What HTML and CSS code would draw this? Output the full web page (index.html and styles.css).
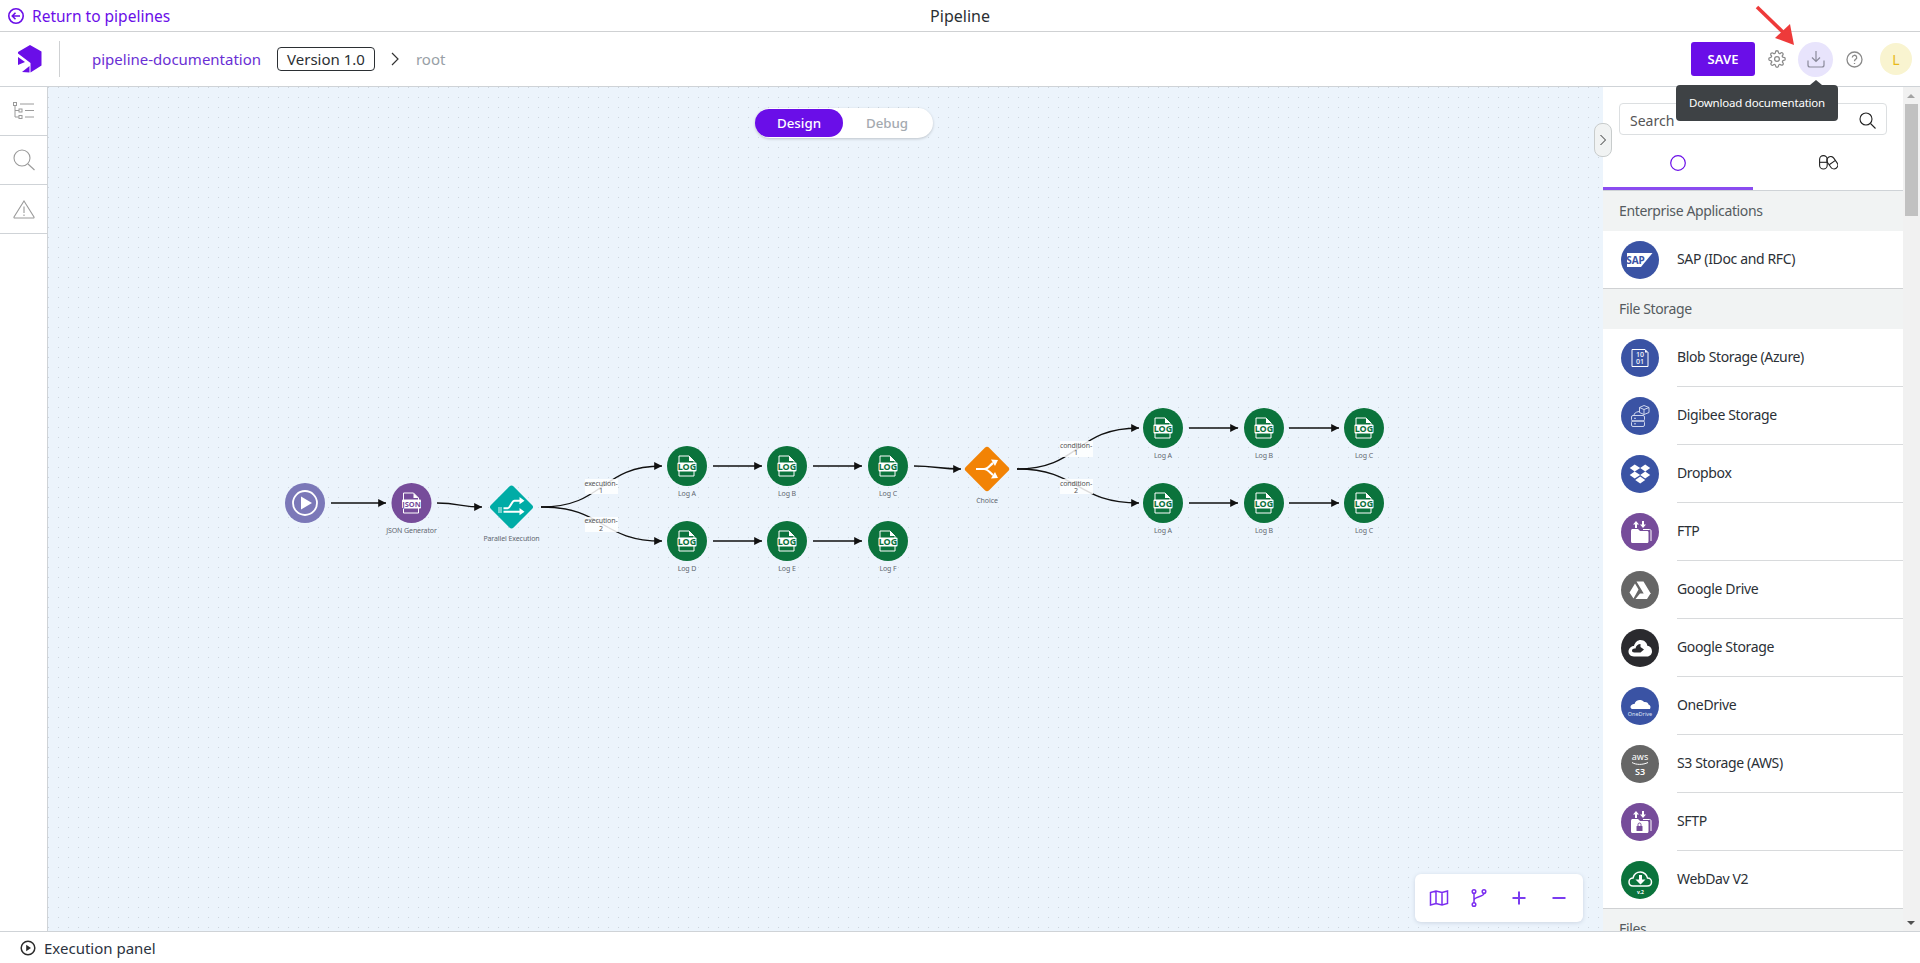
FILE: index.html
```html
<!DOCTYPE html>
<html>
<head>
    <meta name="viewport" content="width=device-width, initial-scale=1">
    <link rel="icon" href="data:,">
    <link rel="stylesheet" href="styles.css">
    <title>Pipeline</title>
</head>
<body>
    <div class="topbar">
        <a class="back-link">
            <svg width="18" height="18" viewBox="0 0 18 18" fill="none" stroke="currentColor" stroke-width="1.6"><circle cx="9" cy="9" r="7.2"/><path d="M13 9H5.5M8.5 5.8 5.3 9l3.2 3.2"/></svg>
            Return to pipelines
        </a>
        <span class="page-title">Pipeline</span>
    </div>

    <div class="header">
        <div class="logo">
            <svg width="26" height="28" viewBox="0 0 26 28" fill="#6a0ee8"><path d="M13 0 24.500 6.500V20.500L13.500 27.500V18L1 8.500V7Z"/><path d="M1 12 8 17 1 20Z"/><path d="M5 27 12.500 21V27.500Z"/></svg>
        </div>
        <div class="crumbs">
            <span class="pipeline-name">pipeline-documentation</span>
            <span class="version">Version 1.0</span>
            <svg class="crumb-arrow" width="10" height="14" viewBox="0 0 10 14" fill="none" stroke="#333" stroke-width="1.200"><path d="M2 1l6 6-6 6"/></svg>
            <span class="crumb-root">root</span>
        </div>
        <div class="actions">
            <button class="save-btn">SAVE</button>
            <span class="action">
                <svg width="18" height="18" viewBox="0 0 24 24" fill="none" stroke="#8a8a8a" stroke-width="1.700"><circle cx="12" cy="12" r="3.200"/><path d="M19.400 15a1.650 1.650 0 0 0 .33 1.820l.06.06a2 2 0 1 1-2.830 2.830l-.06-.06a1.650 1.650 0 0 0-2.800 1.170V21a2 2 0 1 1-4 0v-.09a1.650 1.650 0 0 0-2.800-1.170l-.06.06a2 2 0 1 1-2.830-2.830l.06-.06a1.650 1.650 0 0 0-1.170-2.800H3a2 2 0 1 1 0-4h.09a1.650 1.650 0 0 0 1.170-2.800l-.06-.06a2 2 0 1 1 2.830-2.830l.06.06a1.650 1.650 0 0 0 2.800-1.170V3a2 2 0 1 1 4 0v.09a1.650 1.650 0 0 0 2.800 1.170l.06-.06a2 2 0 1 1 2.830 2.830l-.06.06a1.650 1.650 0 0 0 1.170 2.800H21a2 2 0 1 1 0 4h-.09a1.650 1.650 0 0 0-1.510 1z"/></svg>
            </span>
            <span class="action action-active">
                <svg width="18" height="18" viewBox="0 0 18 18" fill="none" stroke="#8a8a9a" stroke-width="1.200"><path d="M9 1v10M5 7.500 9 11.500l4-4M1 10.500V15a2 2 0 0 0 2 2h12a2 2 0 0 0 2-2v-4.500"/></svg>
            </span>
            <span class="action">
                <svg width="17" height="17" viewBox="0 0 17 17" fill="none" stroke="#8a8a8a" stroke-width="1.300"><circle cx="8.500" cy="8.500" r="7.500"/><path d="M6.300 6.500a2.200 2.200 0 1 1 3.300 1.900c-.8.500-1.100.9-1.100 1.800"/><path d="M8.500 12v1"/></svg>
            </span>
            <span class="avatar">L</span>
        </div>
        <span class="tooltip">Download documentation</span>
        <svg class="red-arrow" width="42" height="42" viewBox="0 0 42 42"><path d="M2 2 33.500 32.500" stroke="#ee3a3a" stroke-width="3.600" fill="none"/><path d="M39 40 20 33 35 19Z" fill="#ee3a3a"/></svg>
    </div>

    <div class="workspace">
        <div class="side-tools">
            <div class="side-tool">
                <svg width="22" height="18" viewBox="0 0 22 18" fill="none" stroke="#9a9a9a" stroke-width="1"><rect x=".5" y=".5" width="3" height="3"/><rect x="6" y="7" width="3" height="3"/><rect x="6" y="13.500" width="3" height="3"/><path d="M2 4v11h4M2 8.500h4M7 2h14M12 8.500h9M12 15h9"/></svg>
            </div>
            <div class="side-tool">
                <svg width="22" height="22" viewBox="0 0 22 22" fill="none" stroke="#9a9a9a" stroke-width="1.100"><circle cx="9" cy="9" r="8"/><path d="M15 15l6.500 6"/></svg>
            </div>
            <div class="side-tool">
                <svg width="22" height="19" viewBox="0 0 22 19" fill="none" stroke="#9a9a9a" stroke-width="1.100"><path d="M11 1 21 17a.7.7 0 0 1-.6 1H1.600a.7.7 0 0 1-.6-1Z"/><path d="M11 6.500v6.500M11 14.500v1.500"/></svg>
            </div>
        </div>

        <div class="canvas">
            <div class="mode-switch">
                <span class="mode mode-on">Design</span>
                <span class="mode">Debug</span>
            </div>

            <svg class="diagram" width="1555" height="843" viewBox="48 87 1555 843">
                <defs>
                    <marker id="head" markerWidth="7" markerHeight="7" refX="6" refY="3" orient="auto"><path d="M0 0 6 3 0 6Z" fill="#111"/></marker>
                    <g id="log">
                        <circle r="20" fill="#0b733c"/>
                        <path d="M-8-3V-10H2L7-5V-3M-8 5V10H7V5" fill="none" stroke="#fff" stroke-width="1"/>
                        <path d="M2-10 7-5H2Z" fill="#fff"/>
                        <rect x="-9.500" y="-3.500" width="19" height="9" rx="1" fill="#fff"/>
                        <text y="4.300" class="in-log" fill="#0b733c">LOG</text>
                    </g>
                </defs>

                <g fill="none" stroke="#111" stroke-width="1.300" marker-end="url(#head)">
                    <path d="M331 503H386"/>
                    <path d="M437 503C460 503 460 507 482 507"/>
                    <path d="M541 507C605 507 600 466 662 466"/>
                    <path d="M541 507C605 507 600 541 662 541"/>
                    <path d="M713 466H762"/>
                    <path d="M813 466H862"/>
                    <path d="M713 541H762"/>
                    <path d="M813 541H862"/>
                    <path d="M914 466C935 466 940 469 961 469"/>
                    <path d="M1017 469C1080 469 1075 428 1139 428"/>
                    <path d="M1017 469C1080 469 1075 503 1139 503"/>
                    <path d="M1189 428H1238"/>
                    <path d="M1289 428H1339"/>
                    <path d="M1189 503H1238"/>
                    <path d="M1289 503H1339"/>
                </g>

                <g class="edge-label">
                    <rect x="585" y="479" width="33" height="15"/>
                    <text x="601" y="486">execution-</text><text x="601" y="493">1</text>
                    <rect x="585" y="517" width="33" height="15"/>
                    <text x="601" y="523">execution-</text><text x="601" y="531">2</text>
                    <rect x="1060" y="441" width="33" height="16"/>
                    <text x="1076" y="448">condition-</text><text x="1076" y="455">1</text>
                    <rect x="1060" y="479" width="33" height="15"/>
                    <text x="1076" y="486">condition-</text><text x="1076" y="493">2</text>
                </g>

                <g transform="translate(305 503)">
                    <circle r="20" fill="#7b78b8"/>
                    <circle r="12" fill="none" stroke="#fff" stroke-width="1.800"/>
                    <path d="M-4-6.500 7 0-4 6.500Z" fill="#fff"/>
                </g>
                <g transform="translate(411.500 503)">
                    <circle r="20" fill="#764c9a"/>
                    <path d="M-8-3V-10H2L7-5V-3M-8 5V10H7V5" fill="none" stroke="#fff" stroke-width="1"/>
                    <path d="M2-10 7-5H2Z" fill="#fff"/>
                    <rect x="-9.500" y="-3.500" width="19" height="9" rx="1" fill="#fff"/>
                    <text y="3.800" class="in-json" fill="#764c9a">JSON</text>
                </g>
                <g transform="translate(511.500 507)">
                    <rect x="-16" y="-16" width="32" height="32" rx="3" transform="rotate(45)" fill="#00aca6"/>
                    <path d="M-8 1.300H-4C-1 1.300 0-6.300 3-6.300H9M-8 4.700H9" fill="none" stroke="#fff" stroke-width="2"/>
                    <path d="M8-10 13-6.300 8-2.800ZM8 1 13 4.700 8 8.200Z" fill="#fff"/>
                    <path d="M-12.500 0V6M-10.500 0V6" stroke="#fff" stroke-width=".9"/>
                </g>
                <g transform="translate(987 469)">
                    <rect x="-16.500" y="-16.500" width="33" height="33" rx="3" transform="rotate(45)" fill="#f28305"/>
                    <path d="M-11 0H-3C1 0 3-4 6-6M-3 0C1 0 3 4 6 6" fill="none" stroke="#fff" stroke-width="2.200"/>
                    <path d="M4-9.500 11-9 8-3ZM4 9.500 11 9 8 3Z" fill="#fff"/>
                </g>

                <use href="#log" x="687" y="466"/>
                <use href="#log" x="787" y="466"/>
                <use href="#log" x="888" y="466"/>
                <use href="#log" x="687" y="541"/>
                <use href="#log" x="787" y="541"/>
                <use href="#log" x="888" y="541"/>
                <use href="#log" x="1163" y="428"/>
                <use href="#log" x="1264" y="428"/>
                <use href="#log" x="1364" y="428"/>
                <use href="#log" x="1163" y="503"/>
                <use href="#log" x="1264" y="503"/>
                <use href="#log" x="1364" y="503"/>

                <g class="node-label">
                    <text x="411.500" y="533">JSON Generator</text>
                    <text x="511.500" y="541">Parallel Execution</text>
                    <text x="687" y="496">Log A</text>
                    <text x="787" y="496">Log B</text>
                    <text x="888" y="496">Log C</text>
                    <text x="687" y="571">Log D</text>
                    <text x="787" y="571">Log E</text>
                    <text x="888" y="571">Log F</text>
                    <text x="987" y="503">Choice</text>
                    <text x="1163" y="458">Log A</text>
                    <text x="1264" y="458">Log B</text>
                    <text x="1364" y="458">Log C</text>
                    <text x="1163" y="533">Log A</text>
                    <text x="1264" y="533">Log B</text>
                    <text x="1364" y="533">Log C</text>
                </g>
            </svg>

            <div class="zoom-tools">
                <svg width="20" height="20" viewBox="0 0 20 20" fill="none" stroke="#7a2cf0" stroke-width="1.500"><path d="M1.500 4.500 7 3l6 1.500L18.500 3v12.500L13 17l-6-1.500-5.500 1.500ZM7 3v12.500M13 4.500V17"/></svg>
                <svg width="20" height="20" viewBox="0 0 20 20" fill="none" stroke="#7a2cf0" stroke-width="1.500"><circle cx="5" cy="3.500" r="1.800"/><circle cx="15" cy="3.500" r="1.800"/><circle cx="5" cy="16.500" r="1.800"/><path d="M5 5.300v9.400M15 5.300c0 4-10 3-10 7"/></svg>
                <svg width="20" height="20" viewBox="0 0 20 20" fill="none" stroke="#7a3cf0" stroke-width="2"><path d="M10 3.500v13M3.500 10h13"/></svg>
                <svg width="20" height="20" viewBox="0 0 20 20" fill="none" stroke="#7a3cf0" stroke-width="2"><path d="M3.500 10h13"/></svg>
            </div>
        </div>

        <div class="panel">
            <span class="collapse-handle">
                <svg width="8" height="12" viewBox="0 0 8 12" fill="none" stroke="#333" stroke-width="1"><path d="M1.500 1l5 5-5 5"/></svg>
            </span>
            <div class="panel-main">
                <div class="search-row">
                    <div class="search-box">
                        <span>Search</span>
                        <svg width="17" height="17" viewBox="0 0 17 17" fill="none" stroke="#222" stroke-width="1.100"><circle cx="7" cy="7" r="6"/><path d="M11.500 11.500l5 5"/></svg>
                    </div>
                </div>
                <div class="tabs">
                    <div class="tab tab-on">
                        <svg width="16" height="16" viewBox="0 0 16 16" fill="none" stroke="#6a0ee8" stroke-width="1.200"><circle cx="8" cy="8" r="7.300"/></svg>
                    </div>
                    <div class="tab">
                        <svg width="19" height="15" viewBox="0 0 19 15" fill="none" stroke="#222" stroke-width="1.100"><rect x=".6" y=".6" width="7.600" height="13.400" rx="3.800"/><path d="M.6 7.300h7.600"/><rect x="9.500" y="1" width="7.600" height="13.400" rx="3.800" transform="rotate(-35 13.300 7.700)"/><path d="M10.200 9.800l6.200-4.400"/></svg>
                    </div>
                </div>

                <div class="section-head">Enterprise Applications</div>
                <div class="item item-last">
                    <svg class="item-icon" viewBox="0 0 38 38"><circle cx="19" cy="19" r="19" fill="#3a53a4"/><path d="M6 12H31.500L20 26H6Z" fill="#fff"/><text x="14.500" y="23" class="in-sap" fill="#3a53a4">SAP</text></svg>
                    <span class="item-name">SAP (IDoc and RFC)</span>
                </div>

                <div class="section-head">File Storage</div>
                <div class="item">
                    <svg class="item-icon" viewBox="0 0 38 38"><circle cx="19" cy="19" r="19" fill="#3a53a4"/><path d="M11 10.500H24L27 13.500V27.500H11Z" fill="none" stroke="#fff" stroke-width="1"/><path d="M24 10.500 27 13.500H24Z" fill="#fff"/><text x="19" y="18" class="in-small" fill="#fff">10</text><text x="19" y="25" class="in-small" fill="#fff">01</text></svg>
                    <span class="item-name">Blob Storage (Azure)</span>
                </div>
                <div class="item">
                    <svg class="item-icon" viewBox="0 0 38 38"><circle cx="19" cy="19" r="19" fill="#3a53a4"/><g fill="none" stroke="#dfe4f4" stroke-width=".9"><rect x="10.500" y="18.500" width="13" height="5.500" rx="1.500"/><rect x="10.500" y="24" width="13" height="5.500" rx="1.500"/><path d="M13 18.500c0-2 1.500-3.500 5-4M18.500 10.500 23 8.500 28 10.500V15.500L23 17.500 18.500 15.500ZM18.500 10.500 23 12.500 28 10.500M23 12.500V17.500M13 21.300h2M13 26.800h2"/></g></svg>
                    <span class="item-name">Digibee Storage</span>
                </div>
                <div class="item">
                    <svg class="item-icon" viewBox="0 0 38 38"><circle cx="19" cy="19" r="19" fill="#3a53a4"/><path d="M14 10 19.500 13.500 14 17 9 13.500ZM24.500 10 29.500 13.500 24.500 17 19.500 13.500ZM14 17 19.500 20.500 14 24 9 20.500ZM24.500 17 29.500 20.500 24.500 24 19.500 20.500ZM19.500 22 24.500 25.500 19.500 29 14.500 25.500Z" fill="#fff" transform="translate(-.3 -.5)"/></svg>
                    <span class="item-name">Dropbox</span>
                </div>
                <div class="item">
                    <svg class="item-icon" viewBox="0 0 38 38"><circle cx="19" cy="19" r="19" fill="#764c9a"/><path d="M10 18.500C10 16.500 10.500 16 12 16H17L19 18H26C27 18 27.500 18.500 27.500 19.500V28C27.500 29.500 27 30 26 30H11.500C10.500 30 10 29.500 10 28Z" fill="#fff"/><path d="M22 16.500H28.500C29.500 16.500 30 17 30 18V28" fill="none" stroke="#fff" stroke-width="1"/><path d="M15 8 18 11.500H16V15H14V11.500H12ZM22 15 19 11.500H21V8H23V11.500H25Z" fill="#fff"/></svg>
                    <span class="item-name">FTP</span>
                </div>
                <div class="item">
                    <svg class="item-icon" viewBox="0 0 38 38"><circle cx="19" cy="19" r="19" fill="#666"/><path d="M15.500 10.500H22.500L30 23H23ZM14 12.500 17.500 18.500 12.500 27.500 8.500 21.500ZM19 22.500H29.500L26 28H14.500Z" fill="#fff"/></svg>
                    <span class="item-name">Google Drive</span>
                </div>
                <div class="item">
                    <svg class="item-icon" viewBox="0 0 38 38"><circle cx="19" cy="19" r="19" fill="#2a2a2e"/><path d="M13 27.500C9 27.500 7.500 24.500 7.500 22.500 7.500 19.500 10 17 13 17 14 13 17 11 19.500 11 23.500 11 26 14 26.500 17 29.500 17 31 19.500 31 22.500 31 25 29 27.500 26 27.500Z" fill="#fff"/><path d="M13.500 23.500C11.500 23.500 11 22.500 11 21.500 11 20 12.500 19.500 14.500 19.500 15 16.500 17 15 19.500 15V18L23 20.500 19.500 23.500Z" fill="#2a2a2e"/></svg>
                    <span class="item-name">Google Storage</span>
                </div>
                <div class="item">
                    <svg class="item-icon" viewBox="0 0 38 38"><circle cx="19" cy="19" r="19" fill="#3a53a4"/><path d="M12 22C9.500 22 9 20 10 18.500 11 17 12.500 17 13.500 17 14.500 13 20 11.500 23 15 25.500 14.500 27.500 16 27.500 17.500 29.500 18 30 20 29 22Z" fill="#fff"/><text x="19" y="28.500" class="in-onedrive" fill="#dfe4f4">OneDrive</text></svg>
                    <span class="item-name">OneDrive</span>
                </div>
                <div class="item">
                    <svg class="item-icon" viewBox="0 0 38 38"><circle cx="19" cy="19" r="19" fill="#666"/><text x="19" y="15" class="in-aws" fill="#fff">aws</text><path d="M11 17.500C15 20 22 20 27 17.500" fill="none" stroke="#fff" stroke-width="1"/><text x="19" y="30" class="in-s3" fill="#fff">S3</text></svg>
                    <span class="item-name">S3 Storage (AWS)</span>
                </div>
                <div class="item">
                    <svg class="item-icon" viewBox="0 0 38 38"><circle cx="19" cy="19" r="19" fill="#764c9a"/><path d="M10 18.500C10 16.500 10.500 16 12 16H17L19 18H26C27 18 27.500 18.500 27.500 19.500V28C27.500 29.500 27 30 26 30H11.500C10.500 30 10 29.500 10 28Z" fill="#fff"/><path d="M22 16.500H28.500C29.500 16.500 30 17 30 18V28" fill="none" stroke="#fff" stroke-width="1"/><path d="M15 8 18 11.500H16V15H14V11.500H12ZM22 15 19 11.500H21V8H23V11.500H25Z" fill="#fff"/><rect x="15.500" y="23" width="6" height="5" rx=".5" fill="#764c9a"/><path d="M17 23V21.500a1.500 1.500 0 0 1 3 0V23" fill="none" stroke="#764c9a" stroke-width="1"/></svg>
                    <span class="item-name">SFTP</span>
                </div>
                <div class="item item-last">
                    <svg class="item-icon" viewBox="0 0 38 38"><circle cx="19" cy="19" r="19" fill="#0b733c"/><path d="M12 25C9 25 8 23 8 21 8 18.500 10 17 12 17 13 13 16 11 19.500 11 23 11 26 14 26.500 17 29 17 30.500 19 30.500 21 30.500 23 29 25 26 25Z" fill="none" stroke="#fff" stroke-width="1.500"/><path d="M19.500 23.500 14.500 18.500H18V14H21V18.500H24.500Z" fill="#fff"/><text x="19.500" y="33" class="in-v2" fill="#fff">v.2</text></svg>
                    <span class="item-name">WebDav V2</span>
                </div>

                <div class="section-head">Files</div>
            </div>
            <div class="scrollbar">
                <span class="scroll-up"></span>
                <span class="scroll-thumb"></span>
                <span class="scroll-down"></span>
            </div>
        </div>
    </div>

    <div class="bottombar">
        <svg width="16" height="16" viewBox="0 0 16 16" fill="none" stroke="#2b2b2b" stroke-width="1.500"><circle cx="8" cy="8" r="6.800"/><path d="M6.200 4.800 11 8 6.200 11.200Z" fill="#2b2b2b" stroke="none"/></svg>
        Execution panel
    </div>
</body>
</html>
```

FILE: styles.css
```css
* {
    box-sizing: border-box;
}

html, body {
    margin: 0;
    height: 100%;
}

body {
    display: flex;
    flex-direction: column;
    overflow: hidden;
    font-family: "Noto Sans", "Open Sans", sans-serif;
    font-size: 14px;
    color: #2b2f33;
    background-color: #fff;
}

.topbar {
    position: relative;
    display: flex;
    align-items: center;
    justify-content: center;
    flex: 0 0 32px;
    border-bottom: 1px solid #cfd1d3;
}

.back-link {
    position: absolute;
    left: 7px;
    top: 6px;
    display: flex;
    align-items: center;
    gap: 7px;
    font-size: 15.500px;
    line-height: 20px;
    color: #6a0ee8;
}

.page-title {
    font-size: 16px;
    line-height: 20px;
    color: #2b2f33;
}

.header {
    position: relative;
    display: flex;
    align-items: center;
    flex: 0 0 55px;
    border-bottom: 1px solid #cfd3d7;
}

.logo {
    display: flex;
    align-items: center;
    width: 60px;
    height: 36px;
    padding-left: 17px;
    border-right: 1px solid #cfd1d3;
}

.crumbs {
    display: flex;
    align-items: center;
    margin-left: 32px;
}

.pipeline-name {
    font-size: 15px;
    color: #6a2fd4;
}

.version {
    margin-left: 16px;
    padding: 0 9px;
    height: 24px;
    line-height: 22px;
    font-size: 15px;
    color: #2b2f33;
    border: 1px solid #2b2f33;
    border-radius: 4px;
}

.crumb-arrow {
    margin-left: 15px;
}

.crumb-root {
    margin-left: 16px;
    font-size: 15px;
    color: #98a0a6;
}

.actions {
    display: flex;
    align-items: center;
    margin-left: auto;
    padding-right: 8px;
}

.save-btn {
    width: 64px;
    height: 34px;
    border: 0;
    border-radius: 3px;
    font-family: inherit;
    font-size: 13px;
    font-weight: 600;
    color: #fff;
    background-color: #6a0ee8;
}

.action {
    display: flex;
    align-items: center;
    justify-content: center;
    width: 35px;
    height: 35px;
    margin-left: 4px;
    border-radius: 50%;
}

.action-active {
    background-color: #e8e4fc;
}

.avatar {
    display: flex;
    align-items: center;
    justify-content: center;
    width: 32px;
    height: 32px;
    margin-left: 8px;
    border-radius: 50%;
    font-size: 14px;
    color: #e8b818;
    background-color: #f9f4d0;
}

.tooltip {
    position: absolute;
    right: 82px;
    top: 53px;
    z-index: 5;
    width: 162px;
    height: 36px;
    line-height: 36px;
    text-align: center;
    font-size: 11.500px;
    letter-spacing: -.2px;
    color: #fff;
    background-color: #3e4245;
    border-radius: 4px;
}

.tooltip:before {
    content: "";
    position: absolute;
    left: 134px;
    top: -5px;
    border-left: 6px solid transparent;
    border-right: 6px solid transparent;
    border-bottom: 5px solid #3e4245;
}

.red-arrow {
    position: absolute;
    left: 1755px;
    top: -27px;
    z-index: 6;
}

.workspace {
    display: flex;
    flex: 1;
    min-height: 0;
}

.side-tools {
    flex: 0 0 48px;
    border-right: 1px solid #cfd3d7;
}

.side-tool {
    display: flex;
    align-items: center;
    justify-content: center;
    height: 49px;
    border-bottom: 1px solid #cfd3d7;
}

.canvas {
    position: relative;
    flex: 1;
    overflow: hidden;
    background-color: #ecf4fc;
    background-image: radial-gradient(circle at .5px .5px, #cdd5dd .6px, transparent .7px);
    background-size: 10px 10px;
}

.diagram {
    position: absolute;
    left: 0;
    top: 0;
}

.edge-label rect {
    fill: #fff;
    opacity: .85;
}

.edge-label text {
    font-size: 7px;
    letter-spacing: -.1px;
    text-anchor: middle;
    fill: #555;
}

.node-label text {
    font-size: 7px;
    letter-spacing: -.1px;
    text-anchor: middle;
    fill: #5f6770;
}

.in-log {
    font-size: 9px;
    font-weight: 700;
    text-anchor: middle;
}

.in-json {
    font-size: 7.500px;
    font-weight: 700;
    text-anchor: middle;
}

.mode-switch {
    position: absolute;
    left: 707px;
    top: 21px;
    z-index: 2;
    display: flex;
    width: 178px;
    height: 30px;
    padding: 1px 0;
    background-color: #fff;
    border-radius: 15px;
    box-shadow: 0 1px 3px rgba(0, 0, 0, .2);
}

.mode {
    display: flex;
    align-items: center;
    justify-content: center;
    width: 88px;
    font-size: 13.300px;
    font-weight: 500;
    color: #a4aab0;
}

.mode-on {
    color: #fff;
    background-color: #6a0ee8;
    border-radius: 14px;
}

.zoom-tools {
    position: absolute;
    right: 20px;
    bottom: 9px;
    display: flex;
    align-items: center;
    justify-content: space-between;
    width: 168px;
    height: 48px;
    padding: 0 14px;
    background-color: #fff;
    border-radius: 6px;
    box-shadow: 0 1px 4px rgba(60, 80, 110, .18);
}

.panel {
    position: relative;
    display: flex;
    flex: 0 0 317px;
    background-color: #fff;
}

.collapse-handle {
    position: absolute;
    left: -9px;
    top: 36px;
    z-index: 3;
    display: flex;
    align-items: center;
    justify-content: center;
    width: 18px;
    height: 34px;
    background-color: #f1f3f3;
    border: 1px solid #c8cccc;
    border-radius: 8px;
}

.panel-main {
    flex: 1;
    min-width: 0;
    overflow: hidden;
}

.search-row {
    padding: 16px 16px 0;
}

.search-box {
    display: flex;
    align-items: center;
    justify-content: space-between;
    height: 32px;
    padding: 2px 10px 0;
    font-size: 14px;
    color: #555;
    border: 1px solid #dcdfe1;
    border-radius: 4px;
}

.tabs {
    display: flex;
    height: 56px;
    border-bottom: 1px solid #cfd3d7;
}

.tab {
    display: flex;
    align-items: center;
    justify-content: center;
    flex: 1;
    height: 55px;
}

.tab-on {
    box-shadow: inset 0 -3px 0 #8a4cf0;
}

.section-head {
    height: 40px;
    padding-left: 16px;
    line-height: 40px;
    font-size: 14px;
    letter-spacing: -.36px;
    color: #555b60;
    background-color: #f1f3f3;
}

.item {
    display: flex;
    align-items: center;
    height: 58px;
    padding-left: 18px;
}

.item-icon {
    flex: 0 0 38px;
    width: 38px;
    height: 38px;
    margin-right: 18px;
}

.item-name {
    display: flex;
    align-items: center;
    flex: 1;
    height: 100%;
    padding-bottom: 2px;
    font-size: 14px;
    letter-spacing: -.36px;
    color: #2b3036;
    border-bottom: 1px solid #d8dadc;
}

.item-last {
    height: 58px;
    border-bottom: 1px solid #cfd1d3;
}

.item-last .item-name {
    border-bottom: 0;
}

.in-sap {
    font-size: 10px;
    font-weight: 700;
    text-anchor: middle;
}

.in-small {
    font-size: 7px;
    font-weight: 500;
    text-anchor: middle;
}

.in-onedrive {
    font-size: 5.500px;
    text-anchor: middle;
}

.in-aws {
    font-size: 9px;
    text-anchor: middle;
}

.in-s3 {
    font-size: 9px;
    font-weight: 600;
    text-anchor: middle;
}

.in-v2 {
    font-size: 5px;
    font-weight: 700;
    text-anchor: middle;
}

.scrollbar {
    position: relative;
    flex: 0 0 17px;
    background-color: #f1f1f1;
}

.scroll-up, .scroll-down {
    position: absolute;
    left: 4px;
    border-left: 4px solid transparent;
    border-right: 4px solid transparent;
}

.scroll-up {
    top: 7px;
    border-bottom: 4px solid #a3a3a3;
}

.scroll-down {
    bottom: 6px;
    border-top: 4px solid #505050;
}

.scroll-thumb {
    position: absolute;
    left: 2px;
    top: 17px;
    width: 13px;
    height: 112px;
    background-color: #c1c1c1;
}

.bottombar {
    display: flex;
    align-items: center;
    flex: 0 0 32px;
    gap: 8px;
    padding-left: 20px;
    font-size: 15px;
    color: #2b3340;
    border-top: 1px solid #cfd3d7;
}
```
